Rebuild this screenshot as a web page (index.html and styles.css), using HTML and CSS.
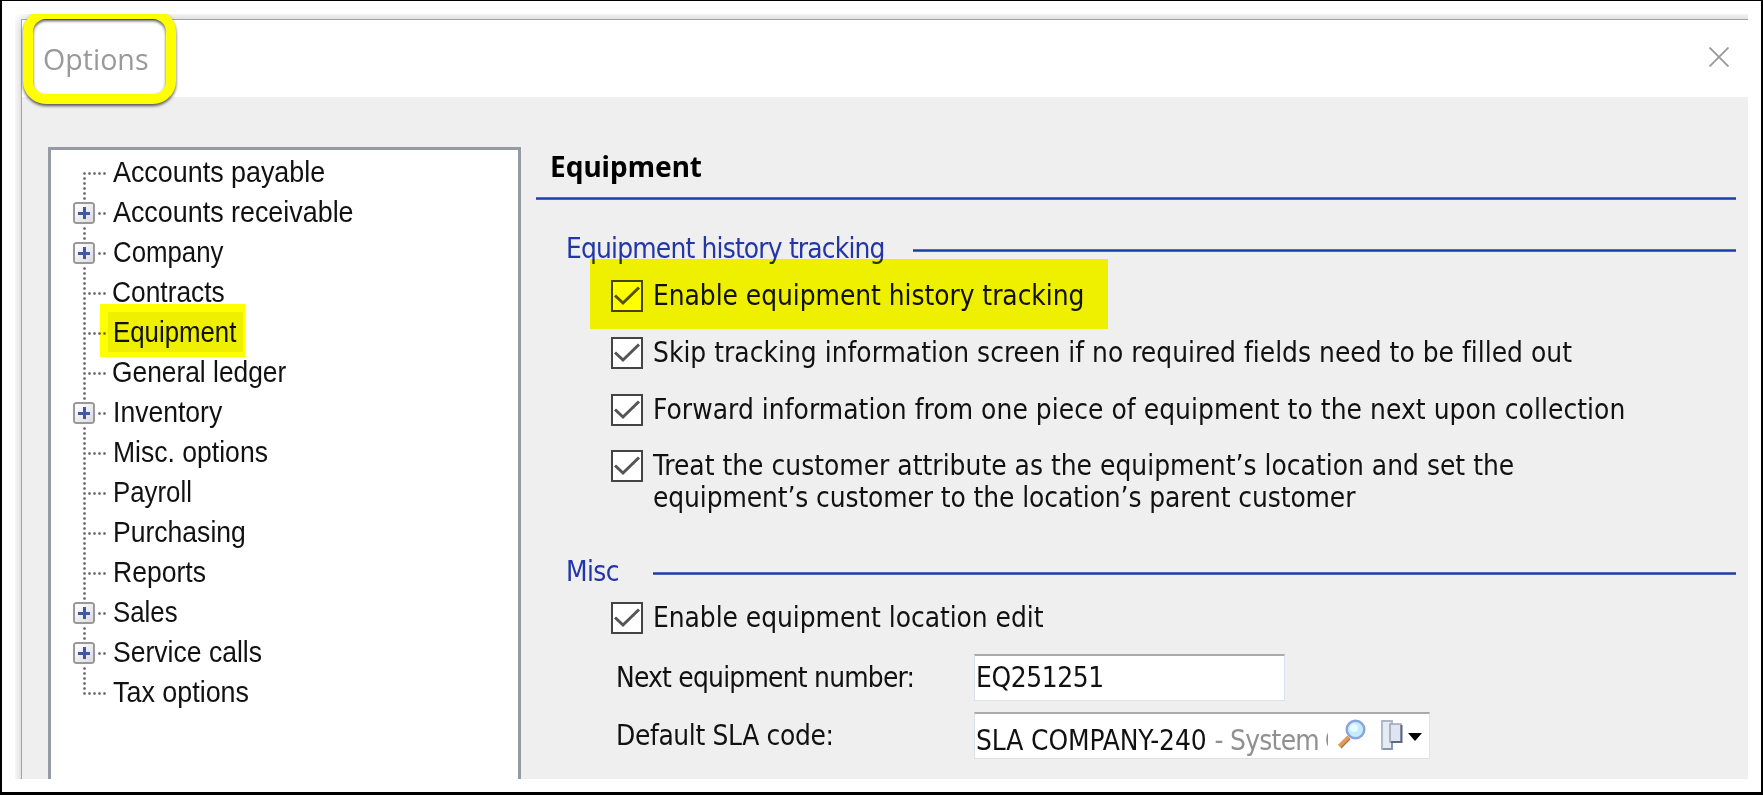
FILE: index.html
```
<!DOCTYPE html>
<html lang="en">
<head>
  <meta charset="UTF-8" />
  <title>Options</title>
  <link rel="stylesheet" href="styles.css">
</head>
<body>

  <svg class="defs">
    <symbol id="tick" viewBox="0 0 32 32">
      <rect x="1" y="1" width="30" height="30" fill="#fff" stroke="#444" stroke-width="2" />
      <path d="M4 15.5 L12 23 L28 7.5" fill="none" stroke="#555" stroke-width="3" />
    </symbol>
  </svg>

  <div class="sheet">
    <div class="window">

      <header class="titlebar">
        <span class="title">Options</span>
        <svg class="close" viewBox="0 0 20 20"><path d="M0.5 0.5 L19.5 19.5 M19.5 0.5 L0.5 19.5" stroke="#999" stroke-width="1.8" /></svg>
      </header>

      <div class="pane">

        <!-- Category tree -->
        <ul class="tree">
          <li><i class="stem"></i><i class="branch"></i><span class="broad">Accounts payable</span></li>
          <li><i class="stem"></i><i class="branch"></i><b class="plus"></b><span class="broad">Accounts receivable</span></li>
          <li><i class="stem"></i><i class="branch"></i><b class="plus"></b><span class="narrow">Company</span></li>
          <li><i class="stem"></i><i class="branch"></i><span class="round">Contracts</span></li>
          <li class="selected"><i class="stem"></i><i class="branch"></i><span class="narrow">Equipment</span><em class="marker"></em></li>
          <li><i class="stem"></i><i class="branch"></i><span class="round">General ledger</span></li>
          <li><i class="stem"></i><i class="branch"></i><b class="plus"></b><span>Inventory</span></li>
          <li><i class="stem"></i><i class="branch"></i><span>Misc. options</span></li>
          <li><i class="stem"></i><i class="branch"></i><span class="narrow">Payroll</span></li>
          <li><i class="stem"></i><i class="branch"></i><span>Purchasing</span></li>
          <li><i class="stem"></i><i class="branch"></i><span>Reports</span></li>
          <li><i class="stem"></i><i class="branch"></i><b class="plus"></b><span class="narrow">Sales</span></li>
          <li><i class="stem"></i><i class="branch"></i><b class="plus"></b><span>Service calls</span></li>
          <li><i class="stem"></i><i class="branch"></i><span class="broad">Tax options</span></li>
        </ul>

        <!-- Settings for the selected category -->
        <main class="settings">
          <h1>Equipment</h1>
          <div class="rule"></div>

          <div class="legend history"><h2>Equipment history tracking</h2><div class="rule"></div></div>
          <div class="checks">
            <label class="check marked"><svg><use href="#tick" /></svg><span>Enable equipment history tracking</span><em class="marker"></em></label>
            <label class="check skip"><svg><use href="#tick" /></svg><span>Skip tracking information screen if no required fields need to be filled out</span></label>
            <label class="check forward"><svg><use href="#tick" /></svg><span>Forward information from one piece of equipment to the next upon collection</span></label>
            <label class="check two-line"><svg><use href="#tick" /></svg><span>Treat the customer attribute as the equipment’s location and set the<br>equipment’s customer to the location’s parent customer</span></label>
          </div>

          <div class="legend misc"><h2>Misc</h2><div class="rule"></div></div>
          <div class="checks">
            <label class="check"><svg><use href="#tick" /></svg><span>Enable equipment location edit</span></label>
          </div>

          <div class="field">
            <span class="name tight">Next equipment number:</span>
            <div class="input number">EQ251251</div>
          </div>
          <div class="field">
            <span class="name">Default SLA code:</span>
            <div class="input lookup">
              <div class="value">SLA COMPANY-240 <span>- System</span> <span class="rest">Code</span></div>
              <svg class="search" viewBox="0 0 28 30">
                <path d="M1.5 27.5 L11 18" stroke="#e39a55" stroke-width="4.5" />
                <path d="M3 29 L12 20" stroke="#a0705a" stroke-width="1.2" />
                <circle cx="17.5" cy="10.5" r="8.8" fill="#c4ecff" stroke="#8aa3dc" stroke-width="2.4" />
                <circle cx="16" cy="9" r="4" fill="#e6faff" />
              </svg>
              <svg class="copy" viewBox="0 0 22 30">
                <path d="M1 1 H11 V29 H1 Z" fill="#e6ebf2" stroke="#a9b6c6" stroke-width="1.8" />
                <path d="M2 29 H11 V22" fill="none" stroke="#7d8ca3" stroke-width="1.6" />
                <path d="M9 4 H20 V22 H9 Z" fill="#dfe3f2" stroke="#9aa6bb" stroke-width="1.6" />
                <path d="M20.5 5 V22 H10" fill="none" stroke="#5a6880" stroke-width="2" />
              </svg>
              <svg class="caret" viewBox="0 0 14 8"><path d="M0 0 H14 L7 8 Z" /></svg>
            </div>
          </div>
        </main>

      </div>
    </div>

    <div class="callout"></div>
  </div>

</body>
</html>
```
FILE: styles.css
```
* {
  box-sizing: border-box;
}

body {
  margin: 0;
  height: 795px;
  padding: 13px;
  background: #fff;
  border: solid #000;
  border-width: 1px 2px 3px;
  overflow: hidden;
  font-family: "DejaVu Sans Condensed", "DejaVu Sans", sans-serif;
  font-size: 27.8px;
  color: #111;
}

.defs {
  position: absolute;
  width: 0;
  height: 0;
}

.sheet {
  position: relative;
  width: 1733px;
  height: 765px;
  padding: 5px 0 0 6px;
  overflow: hidden;
}

.window {
  width: 1740px;
  height: 780px;
  border: 1px solid #a3a3a3;
  background: #fff;
  box-shadow: 0 0 11px rgba(0, 0, 0, 0.24);
}

.titlebar {
  display: flex;
  align-items: center;
  justify-content: space-between;
  width: 1726px;
  height: 77px;
  padding: 0 19px 0 21px;
}

.title {
  font: 28.6px "Open Sans", sans-serif;
  color: #999;
}

.close {
  width: 20px;
  height: 20px;
  margin-top: -3px;
}

.pane {
  display: flex;
  height: 700px;
  padding: 50px 0 0 26px;
  background: #efefef;
}

/* tree */
.tree {
  width: 473px;
  height: 700px;
  margin: 0;
  padding: 3px 0 0 31px;
  list-style: none;
  background: #fff;
  border: 3px solid #959ba5;
  font: 30px "Liberation Sans", sans-serif;
}

.tree li {
  position: relative;
  display: flex;
  height: 40px;
}

.tree span {
  position: relative;
  margin-left: 6px;
  line-height: 37px;
  white-space: nowrap;
  transform: scaleX(0.885);
  transform-origin: left;
}

.tree span.narrow {
  transform: scaleX(0.86);
}

.tree span.broad {
  transform: scaleX(0.896);
}

.tree span.round {
  margin-left: 5px;
  transform: scaleX(0.878);
}

.stem, .branch {
  background: radial-gradient(circle, #666 0.8px, transparent 1.8px) 0 0 / 5px 5px;
}

.stem {
  width: 5px;
  background-position: 0 3px;
}

.branch {
  width: 20px;
  height: 5px;
  margin-top: 18px;
}

.tree li:first-child .stem {
  margin-top: 18px;
  background-position: 0 0;
}

.tree li:last-child .stem {
  height: 23px;
}

.plus {
  position: absolute;
  left: -9px;
  top: 9px;
  width: 22px;
  height: 22px;
  border: 2px solid #999;
  border-radius: 3px;
  outline: 2px solid #fff;
  background:
    linear-gradient(#3f59a0, #3f59a0) center / 12px 3px no-repeat,
    linear-gradient(#3f59a0, #3f59a0) center / 3px 12px no-repeat,
    linear-gradient(135deg, #fff, #dcdcdc);
}

.selected::before {
  content: "";
  position: absolute;
  left: 26px;
  top: -1px;
  width: 135px;
  height: 40px;
  background: #efefef;
}

/* highlighter pen */
.marker {
  position: absolute;
  background: #ff0;
  mix-blend-mode: multiply;
}

.selected .marker {
  left: 18px;
  top: -9px;
  width: 145px;
  height: 53px;
}

.marked .marker {
  left: -21px;
  top: -21px;
  width: 518px;
  height: 70px;
}

.callout {
  position: absolute;
  left: 8px;
  top: -5px;
  width: 153px;
  height: 95px;
  border: 10px solid #ff0;
  border-radius: 23px;
  filter: drop-shadow(0 2px 1.5px rgba(0, 0, 0, 0.65));
}

/* settings */
.settings {
  width: 1200px;
  margin-left: 15px;
}

.rule {
  height: 3px;
  background: linear-gradient(#7f92cb, #1a3ba8 40%, #1a3ba8 60%, #6f84c6);
}

h1 {
  margin: 0;
  height: 50px;
  padding-left: 14px;
  font: bold 28px/38px "Noto Sans", sans-serif;
  color: #000;
}

.legend {
  display: flex;
  align-items: center;
  height: 40px;
  padding-left: 30px;
}

.legend h2 {
  margin: 0;
  font-size: 27.8px;
  font-weight: normal;
  line-height: 42px;
  letter-spacing: -0.82px;
  white-space: nowrap;
  color: #2236a8;
}

.legend .rule {
  flex: 1;
  margin-top: 2px;
}

.history {
  margin-top: 29px;
}

.history h2 {
  width: 347px;
}

.misc {
  margin-top: 38px;
}

.misc h2 {
  width: 87px;
  letter-spacing: -0.6px;
}

.checks {
  display: flex;
  flex-direction: column;
  gap: 24px;
  padding: 11px 0 0 75px;
}

.misc + .checks {
  padding-top: 10px;
}

.check {
  position: relative;
  display: flex;
  gap: 10px;
  height: 33px;
  line-height: 32px;
  letter-spacing: -0.04px;
  white-space: nowrap;
}

.check svg {
  width: 32px;
  height: 32px;
}

.skip {
  letter-spacing: 0.02px;
}

.forward {
  letter-spacing: 0.06px;
}

.two-line {
  height: 64px;
  margin-top: -1px;
  letter-spacing: 0.02px;
}

.two-line span::first-line {
  letter-spacing: 0.02px;
}

.two-line span {
  letter-spacing: -0.1px;
}

.field {
  display: flex;
  margin-top: 19px;
  padding-left: 80px;
}

.field + .field {
  margin-top: 11px;
}

.name {
  width: 358px;
  line-height: 47px;
  letter-spacing: -0.35px;
}

.tight {
  letter-spacing: -0.76px;
}

.input {
  height: 47px;
  padding-left: 1px;
  border: 1px solid #dbe2ec;
  border-top: 2px solid #a9a9b0;
  background: #fff;
  line-height: 44px;
  letter-spacing: -0.4px;
  white-space: nowrap;
}

.number {
  width: 311px;
}

.lookup {
  display: flex;
  width: 456px;
}

.value {
  width: 352px;
  overflow: hidden;
  line-height: 53px;
  letter-spacing: -0.1px;
}

.value span {
  color: #909090;
  letter-spacing: -0.7px;
}

.value .rest {
  margin-left: -2px;
}

.search {
  width: 28px;
  height: 30px;
  margin: 5px 0 0 10px;
}

.copy {
  width: 22px;
  height: 30px;
  margin: 6px 0 0 15px;
}

.caret {
  width: 14px;
  height: 8px;
  margin: 19px 0 0 5px;
}
```
